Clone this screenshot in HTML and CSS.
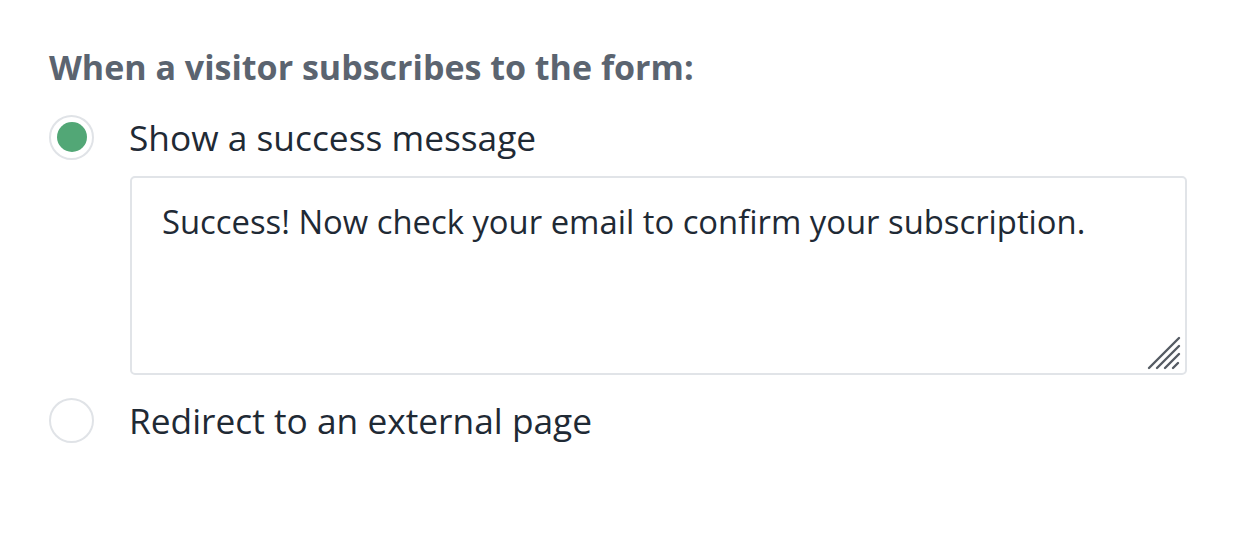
FILE: index.html
```html
<!DOCTYPE html>
<html>
<head>
<meta charset="utf-8">
<link rel="stylesheet" href="styles.css">
</head>
<body>
<div class="panel">
  <div class="heading">When a visitor subscribes to the form:</div>
  <div class="option">
    <span class="radio checked"><span class="dot"></span></span>
    <span class="label">Show a success message</span>
  </div>
  <div class="message-box">
    <div class="message-text">Success! Now check your email to confirm your subscription.</div>
    <svg class="grip" width="36" height="36" viewBox="0 0 36 36">
      <g stroke="#555b63" stroke-width="2.4" stroke-linecap="round">
        <line x1="3" y1="33" x2="33" y2="3"/>
        <line x1="11" y1="33" x2="33" y2="11"/>
        <line x1="19" y1="33" x2="33" y2="19"/>
        <line x1="27" y1="33" x2="32" y2="28"/>
      </g>
    </svg>
  </div>
  <div class="option second">
    <span class="radio"></span>
    <span class="label">Redirect to an external page</span>
  </div>
</div>
</body>
</html>
```
FILE: styles.css
```css
html, body {
  margin: 0;
  padding: 0;
  background: #ffffff;
}
body {
  font-family: "Open Sans", "Liberation Sans", sans-serif;
  color: #1f2a35;
}
.panel {
  padding: 47px 53px 0 49px;
  display: flex;
  flex-direction: column;
}
.heading {
  font-size: 34px;
  font-weight: 700;
  color: #5b6470;
  line-height: 40px;
  margin-bottom: 27px;
}
.option {
  display: flex;
  align-items: center;
  gap: 35px;
  height: 46px;
}
.option.second {
  margin-top: 1px;
}
.radio {
  box-sizing: border-box;
  width: 45px;
  height: 45px;
  border: 2px solid #e0e3e7;
  border-radius: 50%;
  display: flex;
  align-items: center;
  justify-content: center;
  flex: none;
  background: #fff;
}
.dot {
  width: 30px;
  height: 30px;
  border-radius: 50%;
  background: #52a776;
}
.label {
  font-size: 35.3px;
  line-height: 46px;
  color: #1f2a35;
}
.message-box {
  position: relative;
  box-sizing: border-box;
  margin: 16px 0 21px 81px;
  height: 199px;
  border: 2px solid #e1e4e8;
  border-radius: 5px;
  padding: 22px 30px;
}
.message-text {
  font-size: 32.8px;
  line-height: 44px;
  color: #1f2a35;
}
.grip {
  position: absolute;
  right: 3px;
  bottom: 2px;
}
```
